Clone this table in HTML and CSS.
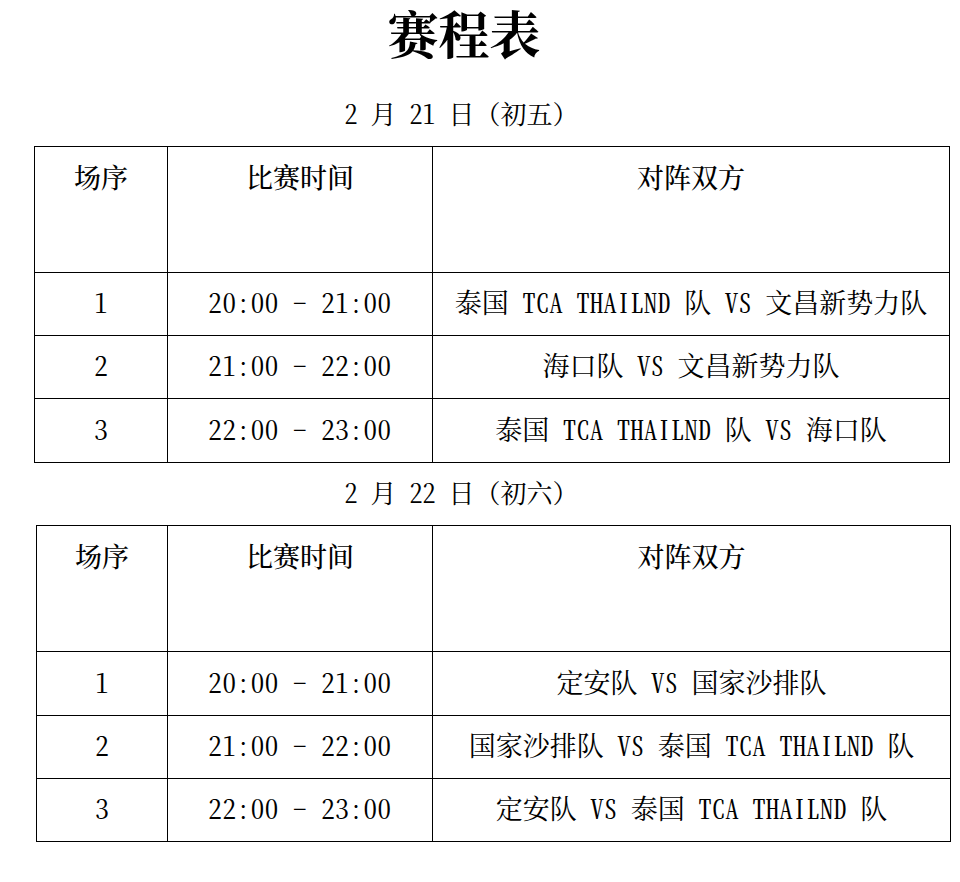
FILE: index.html
```html
<!DOCTYPE html>
<html lang="zh-CN">
<head>
<meta charset="utf-8">
<title>赛程表</title>
<link rel="stylesheet" href="styles.css">
</head>
<body>
<main class="page">
  <h1 class="title">赛程表</h1>

  <p class="date date-first"><span class="hw">2 </span>月<span class="hw"> 21 </span>日（初五）</p>
  <table class="schedule">
    <colgroup><col class="col-no"><col class="col-time"><col class="col-match"></colgroup>
    <thead>
      <tr class="head-row"><th>场序</th><th>比赛时间</th><th>对阵双方</th></tr>
    </thead>
    <tbody>
      <tr class="row"><td>1</td><td class="time">20:00 - 21:00</td><td>泰国 TCA THAILND 队 VS 文昌新势力队</td></tr>
      <tr class="row"><td>2</td><td class="time">21:00 - 22:00</td><td>海口队 VS 文昌新势力队</td></tr>
      <tr class="row row-tall"><td>3</td><td class="time">22:00 - 23:00</td><td>泰国 TCA THAILND 队 VS 海口队</td></tr>
    </tbody>
  </table>

  <p class="date"><span class="hw">2 </span>月<span class="hw"> 22 </span>日（初六）</p>
  <table class="schedule schedule-alt">
    <colgroup><col class="col-no"><col class="col-time"><col class="col-match"></colgroup>
    <thead>
      <tr class="head-row"><th>场序</th><th>比赛时间</th><th>对阵双方</th></tr>
    </thead>
    <tbody>
      <tr class="row row-tall"><td>1</td><td class="time">20:00 - 21:00</td><td>定安队 VS 国家沙排队</td></tr>
      <tr class="row"><td>2</td><td class="time">21:00 - 22:00</td><td>国家沙排队 VS 泰国 TCA THAILND 队</td></tr>
      <tr class="row"><td>3</td><td class="time">22:00 - 23:00</td><td>定安队 VS 泰国 TCA THAILND 队</td></tr>
    </tbody>
  </table>
</main>
</body>
</html>
```

FILE: styles.css
```css
html, body {
  margin: 0;
  padding: 0;
  background: #ffffff;
}

body {
  font-family: "Noto Serif CJK SC", "Noto Sans CJK SC", "Liberation Serif", serif;
  color: #000000;
}

.page {
  width: 960px;
}

.title {
  margin: 0;
  padding-right: 32px;
  height: 83px;
  line-height: 74px;
  font-size: 51px;
  font-weight: 700;
  text-align: center;
  font-family: "Liberation Serif", "Noto Serif CJK SC", "Noto Sans CJK SC", serif;
}

.date {
  margin: 0;
  padding: 9px 37px 13px 0;
  line-height: 40px;
  font-size: 26px;
  font-weight: 400;
  text-align: center;
}

.date-first {
  padding-top: 10px;
}

.hw {
  font-feature-settings: "hwid" 1;
}

.schedule {
  margin-left: 34px;
  width: 916px;
  table-layout: fixed;
  border-collapse: collapse;
  border: 1px solid #000000;
}

.schedule-alt {
  margin-left: 36px;
  width: 915px;
}

.col-no { width: 133px; }
.col-time { width: 265px; }
.col-match { width: auto; }

.schedule-alt .col-no { width: 131px; }

.schedule th,
.schedule td {
  border: 1px solid #000000;
  padding: 0;
  text-align: center;
  font-size: 27px;
}

.schedule th {
  vertical-align: top;
  padding-top: 13px;
  line-height: 34px;
  font-weight: 500;
}

.schedule td {
  vertical-align: middle;
  padding-bottom: 4px;
  line-height: 34px;
  font-weight: 400;
  font-feature-settings: "hwid" 1;
}

.head-row {
  height: 126px;
}

.row {
  height: 63px;
}

.row-tall {
  height: 64px;
}

.time {
  letter-spacing: 0.6px;
}
```
